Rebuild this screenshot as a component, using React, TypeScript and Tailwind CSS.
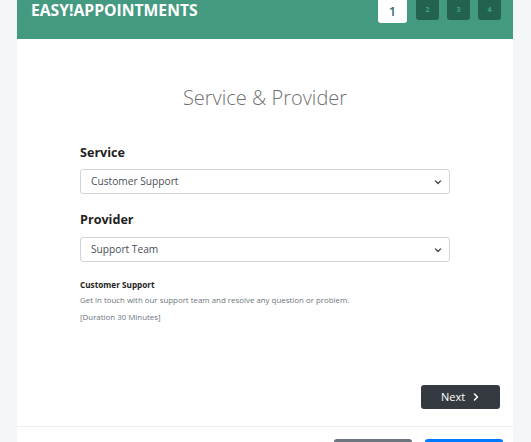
import React from 'react'

function Chevron() {
  return (
    <svg className="w-[8px] h-[8px] text-[#555]" viewBox="0 0 16 16" fill="none" stroke="currentColor">
      <path strokeLinecap="round" strokeLinejoin="round" strokeWidth={3} d="M3 6l5 5 5-5" />
    </svg>
  )
}

function SelectBox({ value }: { value: string }) {
  return (
    <div className="h-[25px] w-full border border-[#ced4da] rounded-[3px] bg-white flex items-center justify-between pl-[10px] pr-[7px]">
      <span className="text-[10.2px] text-[#495057]">{value}</span>
      <Chevron />
    </div>
  )
}

const steps = ['2', '3', '4']

export default function App() {
  return (
    <div
      className="w-[531px] h-[442px] overflow-hidden bg-[#f4f7fa] pl-[17px] pr-[18px]"
      style={{ fontFamily: '"Open Sans", "Noto Sans", sans-serif' }}
    >
      <div className="bg-white h-full flex flex-col">
        {/* header */}
        <div className="h-[39px] bg-[#449a80] flex items-start justify-between pl-[14px] pr-[12px] shrink-0">
          <span className="text-white font-bold text-[15.7px] leading-[20px]">EASY!APPOINTMENTS</span>
          <div className="flex items-start gap-[8px]">
            <div className="w-[29px] h-[23px] bg-white rounded-b-[3px] flex items-center justify-center text-[13px] font-semibold text-[#3a6c7a] mr-[1px]">
              1
            </div>
            {steps.map((s) => (
              <div
                key={s}
                className="w-[23px] h-[20px] bg-[#22624f] rounded-b-[3px] flex items-center justify-center text-[7px] font-bold text-[#3aa882]"
              >
                {s}
              </div>
            ))}
          </div>
        </div>

        {/* body */}
        <div className="flex-1 flex flex-col">
          <h2 className="text-center text-[20px] leading-[28px] font-light text-[#707070] mt-[45px]">Service &amp; Provider</h2>

          <div className="px-[63px]">
            <div className="mt-[31px] mb-[6px] text-[12.6px] leading-[20px] font-bold text-[#222]">Service</div>
            <SelectBox value="Customer Support" />

            <div className="mt-[16px] mb-[7px] text-[12.6px] leading-[20px] font-bold text-[#222]">Provider</div>
            <SelectBox value="Support Team" />

            <div className="mt-[16px] text-[8.2px] leading-[13px] font-bold text-[#222]">Customer Support</div>
            <div className="mt-[3px] text-[7.9px] leading-[13px] text-[#6c757d]">
              Get in touch with our support team and resolve any question or problem.
            </div>
            <div className="mt-[4px] text-[7.9px] leading-[13px] text-[#6c757d]">[Duration 30 Minutes]</div>
          </div>

          <div className="flex justify-end pr-[13px] mt-[61px]">
            <button className="w-[79px] h-[24px] bg-[#343a40] rounded-[3px] text-white text-[11px] flex items-center justify-center gap-[7px]">
              Next
              <svg className="w-[8px] h-[8px]" viewBox="0 0 16 16" fill="none" stroke="currentColor">
                <path strokeLinecap="round" strokeLinejoin="round" strokeWidth={3} d="M5 2l6 6-6 6" />
              </svg>
            </button>
          </div>

          <div className="mt-[17px] border-t border-[#eeeeee] flex justify-end gap-[13px] pr-[10px] pt-[12px]">
            <div className="w-[78px] h-[24px] bg-[#6c757d] rounded-[3px]" />
            <div className="w-[78px] h-[24px] bg-[#007bff] rounded-[3px]" />
          </div>
        </div>
      </div>
    </div>
  )
}
